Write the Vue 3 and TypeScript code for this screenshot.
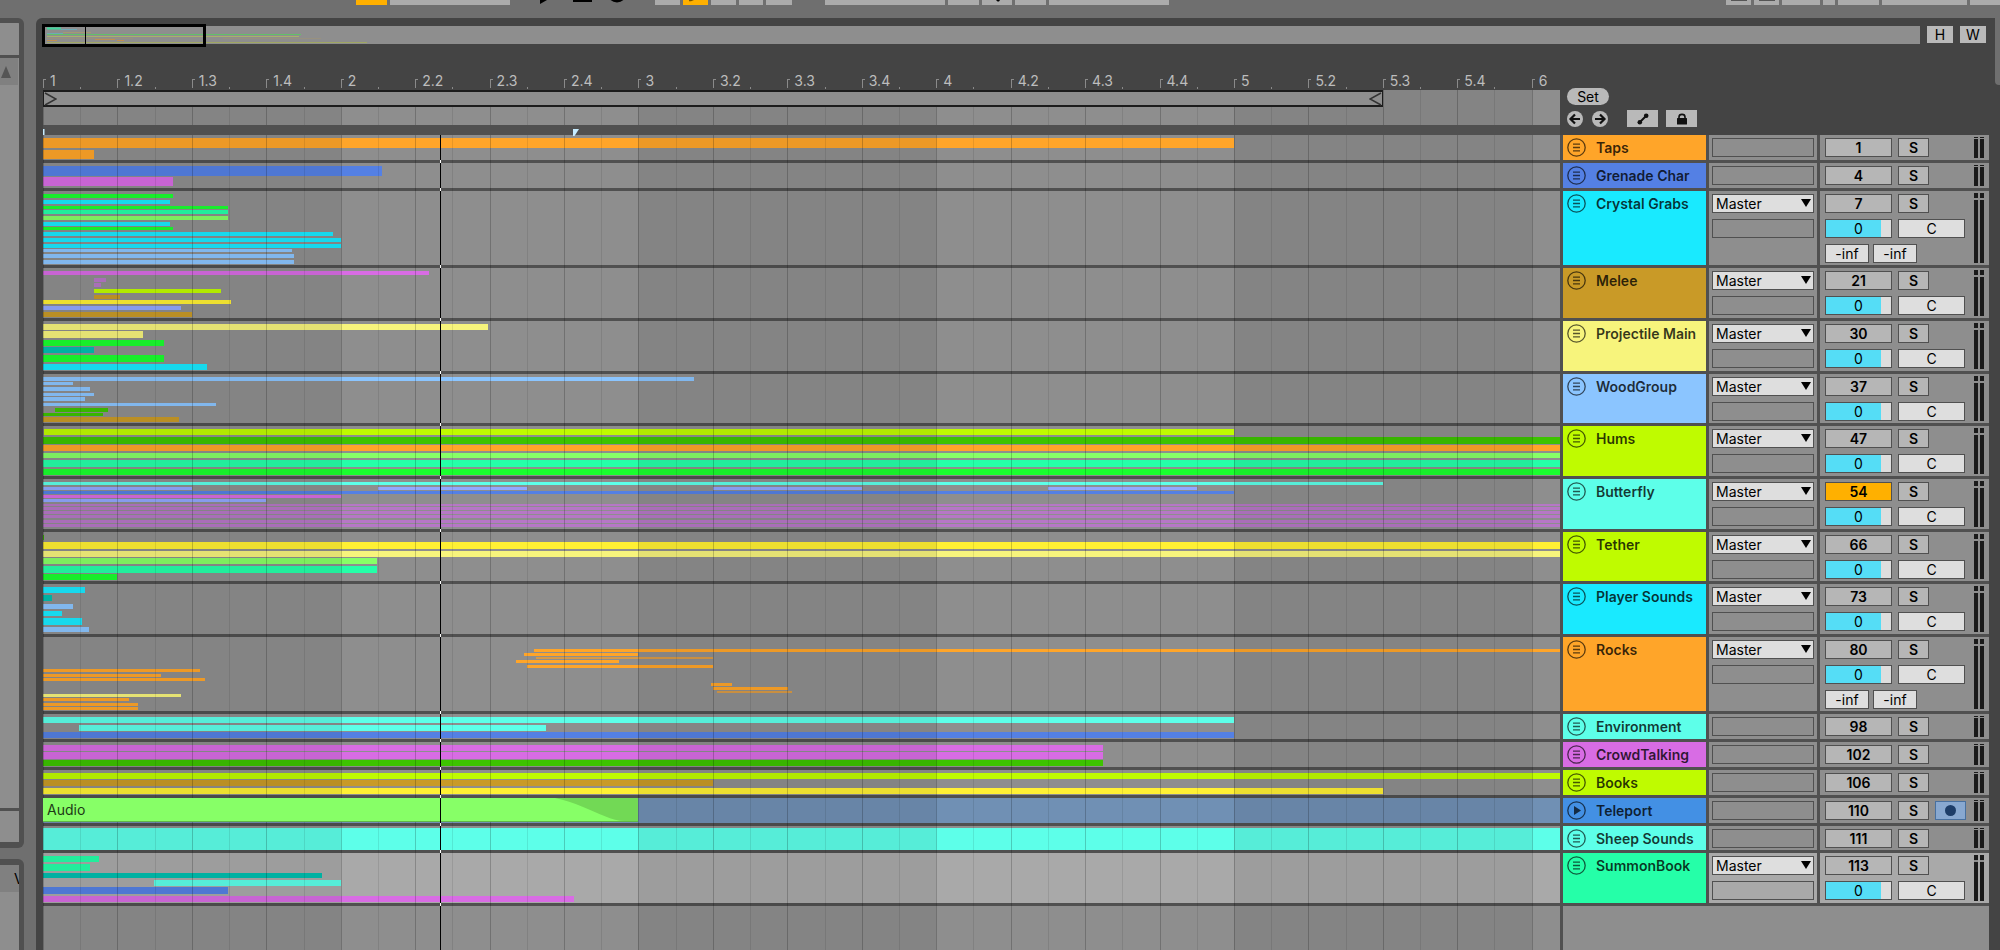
<script setup lang="ts">
import { ref } from 'vue'

type Clip = [color: string, start: number, end: number, top: number, height: number]

interface Track {
  name: string
  color: string
  num: number
  height: number
  clips: Clip[]
  sends?: boolean
  routed?: boolean
  muted?: boolean
  selected?: boolean
  audio?: boolean
}

// Visible range of the arrangement, in beats.
const END = 20.38
const PLAYHEAD = 5.34
const LOOP_END = 18

const C = {
  orange: '#ffa529', blue: '#5480e4', magenta: '#d86ce4', green: '#1aff2f', cyan: '#19eaff',
  mint: '#25ffa8', leaf: '#87ff67', sky: '#8bc5ff', brown: '#c99a27', lime: '#bffb00',
  yellow: '#fff034', pale: '#f7f47c', peri: '#92a7ff', teal: '#00bfaf', forest: '#3dc300',
  aqua: '#5dffe9', purple: '#b677c6', azure: '#4390e4', amber: '#d99a45',
}

const tracks: Track[] = [
  { name: 'Taps', color: C.orange, num: 1, height: 28, clips: [[C.orange, 0, 16, 3, 10], [C.orange, 0, 0.68, 15, 9]] },
  { name: 'Grenade Char', color: C.blue, num: 4, height: 28, clips: [[C.blue, 0, 4.55, 3, 10], [C.magenta, 0, 1.75, 14, 9]] },
  {
    name: 'Crystal Grabs', color: C.cyan, num: 7, height: 77, routed: true, sends: true, clips: [
      [C.green, 0, 1.75, 3, 4], [C.cyan, 0, 1.7, 9, 4], [C.green, 0, 2.49, 15, 3], [C.mint, 0, 2.49, 19, 4],
      [C.leaf, 0, 2.49, 25, 4], [C.cyan, 0, 1.7, 31, 4], [C.green, 0, 1.75, 36, 3], [C.cyan, 0, 3.89, 41, 4],
      [C.cyan, 0, 4, 47, 4], [C.cyan, 0, 4, 53, 4], [C.sky, 0, 3.34, 58, 3], [C.sky, 0, 3.37, 63, 4], [C.sky, 0, 3.37, 69, 4],
    ],
  },
  {
    name: 'Melee', color: C.brown, num: 21, height: 53, routed: true, clips: [
      [C.magenta, 0, 5.18, 3, 4], [C.purple, 0.68, 0.84, 10, 4], [C.purple, 0.68, 0.78, 15, 4], [C.lime, 0.68, 2.39, 21, 4],
      [C.brown, 0.68, 1.03, 27, 4], [C.yellow, 0, 2.53, 32, 4], [C.peri, 0, 1.86, 38, 4], [C.brown, 0, 2, 44, 5],
    ],
  },
  {
    name: 'Projectile Main', color: C.pale, num: 30, height: 53, routed: true, clips: [
      [C.pale, 0, 5.98, 3, 6], [C.pale, 0, 1.35, 10, 7], [C.green, 0, 1.63, 19, 6], [C.teal, 0, 0.68, 26, 6],
      [C.green, 0, 1.63, 34, 7], [C.cyan, 0, 2.2, 43, 6],
    ],
  },
  {
    name: 'WoodGroup', color: C.sky, num: 37, height: 52, routed: true, clips: [
      [C.sky, 0, 8.74, 3, 4], [C.sky, 0, 0.4, 8, 3], [C.sky, 0, 0.63, 13, 4], [C.sky, 0, 0.68, 19, 3], [C.sky, 0, 0.57, 23, 4],
      [C.sky, 0, 2.32, 29, 3], [C.forest, 0.16, 0.88, 34, 4], [C.forest, 0, 0.81, 39, 3], [C.brown, 0, 1.83, 43, 5],
    ],
  },
  {
    name: 'Hums', color: C.lime, num: 47, height: 53, routed: true, clips: [
      [C.lime, 0.02, 16, 3, 6], [C.forest, 0, END, 11, 7], [C.orange, 0, END, 19, 6], [C.leaf, 0, END, 27, 5],
      [C.mint, 0, END, 34, 7], [C.green, 0, END, 43, 6],
    ],
  },
  {
    name: 'Butterfly', color: C.aqua, num: 54, height: 53, routed: true, muted: true, clips: [
      [C.aqua, 0, 18, 3, 3], [C.peri, 0, 2, 8, 3], [C.peri, 4.5, 6.5, 8, 3], [C.peri, 9, 11, 8, 3], [C.peri, 13.5, 15.5, 8, 3],
      [C.blue, 0, 16, 12, 3], [C.magenta, 0, 4, 16, 3], [C.peri, 0, 3, 20, 3],
      [C.purple, 0, END, 25, 2], [C.purple, 0, END, 28, 3], [C.purple, 0, END, 32, 3], [C.purple, 0, END, 36, 3],
      [C.purple, 0, END, 41, 3], [C.purple, 0, END, 45, 3],
    ],
  },
  {
    name: 'Tether', color: C.lime, num: 66, height: 52, routed: true, clips: [
      [C.forest, 0, 0.02, 3, 5], [C.yellow, 0, END, 10, 7], [C.pale, 0, END, 19, 6], [C.leaf, 0, 4.49, 26, 6],
      [C.mint, 0, 4.49, 34, 7], [C.green, 0, 1, 42, 6],
    ],
  },
  {
    name: 'Player Sounds', color: C.cyan, num: 73, height: 53, routed: true, clips: [
      [C.cyan, 0, 0.57, 3, 6], [C.teal, 0, 0.12, 11, 6], [C.sky, 0, 0.4, 20, 5], [C.cyan, 0, 0.25, 27, 5],
      [C.cyan, 0, 0.52, 34, 7], [C.sky, 0, 0.62, 43, 5],
    ],
  },
  {
    name: 'Rocks', color: C.orange, num: 80, height: 77, routed: true, sends: true, clips: [
      [C.orange, 6.6, END, 12, 3], [C.orange, 6.46, 8, 16, 3], [C.amber, 6.62, 9, 20, 2], [C.orange, 6.36, 7.74, 23, 3],
      [C.orange, 6.5, 9, 28, 3], [C.orange, 0, 2.11, 32, 3], [C.orange, 0, 1.58, 37, 3], [C.orange, 0, 2.18, 41, 3],
      [C.orange, 8.98, 9.25, 46, 3], [C.orange, 9, 10.01, 50, 3], [C.amber, 9.06, 10.06, 54, 2],
      [C.pale, 0, 1.86, 57, 3], [C.orange, 0, 1.15, 61, 3], [C.orange, 0, 1.27, 66, 3], [C.orange, 0, 1.27, 70, 3],
    ],
  },
  { name: 'Environment', color: C.aqua, num: 98, height: 28, clips: [[C.aqua, 0, 16, 3, 6], [C.aqua, 0.48, 6.76, 11, 6], [C.blue, 0, 16, 18, 6]] },
  { name: 'CrowdTalking', color: C.magenta, num: 102, height: 28, clips: [[C.magenta, 0, 14.24, 3, 6], [C.magenta, 0, 14.24, 10, 7], [C.forest, 0, 14.24, 18, 6]] },
  { name: 'Books', color: C.lime, num: 106, height: 28, clips: [[C.lime, 0, END, 3, 6], [C.brown, 0, 9, 10, 6], [C.yellow, 0, 18, 18, 6]] },
  { name: 'Teleport', color: C.azure, num: 110, height: 28, audio: true, clips: [] },
  { name: 'Sheep Sounds', color: C.aqua, num: 111, height: 27, clips: [[C.aqua, 0, END, 2, 22]] },
  {
    name: 'SummonBook', color: C.mint, num: 113, height: 53, routed: true, selected: true, clips: [
      [C.mint, 0, 0.75, 3, 6], [C.mint, 0, 0.63, 11, 7], [C.teal, 0, 3.75, 20, 5], [C.aqua, 1.49, 4, 27, 6],
      [C.blue, 0, 2.49, 34, 7], [C.magenta, 0, 7.13, 43, 6],
    ],
  },
]

const routes = ref<string[]>(tracks.map(() => 'Master'))

const pct = (beats: number): string => `${(beats / END) * 100}%`
const clipStyle = ([color, start, end, top, height]: Clip) => ({
  left: pct(start), width: pct(end - start), top: `${top}px`, height: `${height}px`, background: color,
})

const beats = Array.from({ length: 21 }, (_, i) => ({
  at: i,
  label: i % 4 ? `${Math.floor(i / 4) + 1}.${(i % 4) + 1}` : `${i / 4 + 1}`,
}))
const halves = Array.from({ length: 20 }, (_, i) => i + 0.5)
const darkBars = [0, 8, 16]

const px = (w: number) => ({ width: `${w}px` })
const transportGroups: { cls: string; items: { w: number; on?: boolean; dash?: boolean; dot?: boolean }[] }[] = [
  { cls: 'g-mode', items: [{ w: 25 }, { w: 25, on: true, dot: true }, { w: 25 }, { w: 24 }, { w: 26 }] },
  { cls: 'g-loop', items: [{ w: 120 }, { w: 31 }, { w: 30, dot: true }, { w: 31 }, { w: 120 }] },
  { cls: 'g-right', items: [{ w: 25, dash: true }, { w: 25, dash: true }, { w: 38 }, { w: 12 }, { w: 41 }, { w: 85 }, { w: 30 }] },
]
</script>

<template>
  <div class="app">
    <header class="transport">
      <div class="group g-tempo">
        <button class="tb on" :style="px(31)" aria-label="Metronome"></button>
        <button class="tb" :style="px(120)" aria-label="Quantization"></button>
      </div>
      <svg class="transport-icons" width="84" height="5" viewBox="0 0 84 5" aria-hidden="true">
        <path d="M0 -14V4L7 0Z" />
        <rect x="33" y="-14" width="19" height="16" />
        <circle cx="77" cy="-7" r="9.500" />
      </svg>
      <div v-for="g in transportGroups" :key="g.cls" class="group" :class="g.cls">
        <button v-for="(b, i) in g.items" :key="i" class="tb" :class="{ on: b.on, dash: b.dash }" :style="px(b.w)" aria-label="Transport control">
          <svg v-if="b.dot" width="20" height="5" viewBox="0 0 20 5"><path :d="b.on ? 'M6 0H11L8 1.200H6Z' : 'M14 0H18L17 1.500H15.500Z'" :fill="b.on ? '#7a5500' : '#000'" /></svg>
        </button>
      </div>
    </header>

    <div class="main">
      <aside class="sidebar">
        <div class="panel upper">
          <div class="panel-head"></div>
          <button class="scroll-up" aria-label="Scroll up">
            <svg width="12" height="14" viewBox="0 0 12 14"><path d="M6 1L11 13H1Z" fill="#555" /></svg>
          </button>
          <div class="panel-body"></div>
          <div class="panel-foot"></div>
        </div>
        <div class="panel lower">
          <div class="lower-head">V</div>
        </div>
      </aside>

      <main class="workspace">
        <div class="edge-tab"></div>
        <div class="overview-row">
          <div class="overview">
            <svg class="mini" width="340" height="18" viewBox="0 0 340 18" fill="none" aria-hidden="true">
              <path d="M4 2.500H18" stroke="#3fd79c" stroke-width="2" />
              <path d="M18 3.500H34M4 7.500H20" stroke="#6fa9b5" />
              <path d="M20 6.500H48" stroke="#a49a72" />
              <path d="M4 8.500H258" stroke="#62c168" />
              <path d="M4 10.500H256" stroke="#a9b06c" />
              <path d="M4 12.500H90M180 12.500H278" stroke="#98917f" />
              <path d="M4 14.500H14M52 13.500H72M74 14.500H81" stroke="#c08f52" />
              <path d="M4 16.500H324" stroke="#9fa763" />
            </svg>
            <div class="view-box"><i class="mini-playhead"></i></div>
          </div>
          <button class="hw">H</button>
          <button class="hw">W</button>
        </div>

        <div class="arrangement">
          <section class="timeline">
            <div class="ruler">
              <div v-for="b in beats" :key="b.at" class="tick" :style="{ left: pct(b.at) }">{{ b.label }}</div>
              <i v-for="h in halves" :key="h" class="half-tick" :style="{ left: pct(h) }"></i>
            </div>
            <div class="canvas">
              <div class="scrub">
                <div class="loop" :style="{ width: pct(LOOP_END) }">
                  <svg width="13" height="14" viewBox="0 0 13 14" fill="none" stroke="#333" stroke-width="1.500"><path d="M1 1L12 7L1 13" /></svg>
                  <svg width="13" height="14" viewBox="0 0 13 14" fill="none" stroke="#333" stroke-width="1.500"><path d="M12 1L1 7L12 13" /></svg>
                </div>
              </div>
              <div class="locators">
                <svg class="locator" :style="{ left: '0%' }" width="2" height="7" viewBox="0 0 2 7"><path d="M0 0H1.500V6H0Z" fill="#c6ecff" /></svg>
                <svg class="locator" :style="{ left: pct(7.12) }" width="6" height="7" viewBox="0 0 6 7"><path d="M0 0H6L1.500 7H0Z" fill="#c6ecff" /></svg>
              </div>
              <div class="lanes">
                <div v-for="t in tracks" :key="t.num" class="lane" :class="{ selected: t.selected, audio: t.audio }" :style="{ height: t.height + 'px' }">
                  <div v-for="(c, i) in t.clips" :key="i" class="clip" :style="clipStyle(c)"></div>
                  <div v-if="t.audio" class="audio-clip" :style="{ width: pct(8) }">
                    <span>Audio</span>
                    <svg class="fade" viewBox="0 0 100 24" preserveAspectRatio="none"><path d="M0 0C24 4 42 13 60 19C68 22 76 24 84 24H100V0Z" fill="#72d955" /></svg>
                  </div>
                  <i class="playhead-gap" :style="{ left: pct(PLAYHEAD) }"></i>
                </div>
                <div class="playhead" :style="{ left: pct(PLAYHEAD) }"></div>
              </div>
              <div class="grid" aria-hidden="true">
                <div v-for="b in darkBars" :key="b" class="shade" :style="{ left: pct(b), width: pct(4) }"></div>
                <i v-for="b in beats" :key="b.at" class="line" :style="{ left: pct(b.at) }"></i>
                <i v-for="h in halves" :key="h" class="line half" :style="{ left: pct(h) }"></i>
              </div>
            </div>
          </section>

          <section class="mixer">
            <div class="mixer-head">
              <button class="set">Set</button>
              <div class="tools">
                <button class="round" aria-label="Previous locator">
                  <svg width="16" height="16" viewBox="0 0 16 16" fill="none" stroke="#111" stroke-width="2.200"><path d="M13 8H4M8 3.500L3.500 8L8 12.500" /></svg>
                </button>
                <button class="round" aria-label="Next locator">
                  <svg width="16" height="16" viewBox="0 0 16 16" fill="none" stroke="#111" stroke-width="2.200"><path d="M3 8H12M8 3.500L12.500 8L8 12.500" /></svg>
                </button>
                <button class="tool first" aria-label="Automation mode">
                  <svg width="12" height="12" viewBox="0 0 12 12"><path d="M3 9L9 3" stroke="#111" stroke-width="2" /><circle cx="2.800" cy="9.200" r="2.300" fill="#111" /><circle cx="9.200" cy="2.800" r="2.300" fill="#111" /></svg>
                </button>
                <button class="tool" aria-label="Lock envelopes">
                  <svg width="12" height="12" viewBox="0 0 12 12"><rect x="1" y="5" width="10" height="6.500" rx="0.500" fill="#111" /><path d="M3 6V4C3 0.500 9 0.500 9 4V6" fill="none" stroke="#111" stroke-width="1.600" /></svg>
                </button>
              </div>
            </div>

            <div v-for="(t, i) in tracks" :key="t.num" class="strip" :class="{ selected: t.selected }" :style="{ height: t.height + 'px' }">
              <div class="title" :style="{ background: t.color }">
                <button class="fold" :aria-label="'Unfold ' + t.name">
                  <svg width="19" height="19" viewBox="0 0 19 19" fill="none" stroke="#000" stroke-opacity="0.650">
                    <circle cx="9.500" cy="9.500" r="8.700" stroke-width="1.300" />
                    <path v-if="t.audio" d="M7 5L14 9.500L7 14Z" fill="#000" fill-opacity="0.700" stroke="none" />
                    <path v-else d="M6 6.200H13M6 9.500H13M6 12.800H13" stroke-width="1.300" />
                  </svg>
                </button>
                <span class="name">{{ t.name }}</span>
              </div>
              <div class="io">
                <label v-if="t.routed" class="route">
                  <select v-model="routes[i]" :aria-label="t.name + ' output'"><option>Master</option></select>
                  <svg width="10" height="8" viewBox="0 0 10 8"><path d="M0 0H10L5 8Z" fill="#000" /></svg>
                </label>
                <div class="slot"></div>
              </div>
              <div class="controls">
                <div class="knobs">
                  <div class="krow">
                    <button class="num" :class="{ muted: t.muted }">{{ t.num }}</button>
                    <button class="solo">S</button>
                    <button v-if="t.audio" class="arm" aria-label="Arm recording"><i></i></button>
                  </div>
                  <div v-if="t.routed" class="krow">
                    <input class="field vol" value="0" :aria-label="t.name + ' volume'" />
                    <input class="field" value="C" :aria-label="t.name + ' pan'" />
                  </div>
                  <div v-if="t.sends" class="krow sends">
                    <input class="field send" value="-inf" :aria-label="t.name + ' send A'" />
                    <input class="field send" value="-inf" :aria-label="t.name + ' send B'" />
                  </div>
                </div>
                <div class="meter" :class="{ short: !t.routed }"><i></i><i></i></div>
              </div>
            </div>
            <div class="mixer-rest"></div>
          </section>
        </div>
      </main>
    </div>
  </div>
</template>

<style>
body {
  margin: 0;
  background: #6f6f6f;
}
</style>

<style scoped>
.app {
  display: flex;
  flex-direction: column;
  min-height: 100vh;
  overflow: hidden;
  background: #6f6f6f;
  color: #000;
  font: 14px/19px Inter, "Open Sans", sans-serif;
}
.app *,
.app *::before {
  box-sizing: border-box;
}
button,
select,
input {
  margin: 0;
  padding: 0;
  border: 0;
  border-radius: 0;
  font: inherit;
  color: inherit;
  outline: 0;
}
svg {
  display: block;
}

/* transport */
.transport {
  display: flex;
  height: 5px;
  margin-bottom: 13px;
  overflow: hidden;
}
.group {
  display: flex;
  gap: 3px;
}
.g-tempo { margin-left: 356px; }
.transport-icons { margin: 0 31px 0 30px; flex: none; }
.g-loop { margin-left: 33px; }
.g-right { margin-left: auto; }
.tb {
  height: 5px;
  background: #ababab;
  flex: none;
}
.tb.on { background: #ffb000; }
.tb.dash {
  background: linear-gradient(#555, #555) center top / 16px 1px no-repeat #ababab;
}

.main {
  display: flex;
  flex: 1;
  gap: 12px;
}

/* sidebar */
.sidebar {
  display: flex;
  flex-direction: column;
  gap: 11px;
  width: 24px;
  flex: none;
}
.panel {
  display: flex;
  flex-direction: column;
  border: solid #505050;
  border-width: 5px 5px 0 0;
  background: #8e8e8e;
}
.upper {
  flex: 1;
  border-bottom-width: 6px;
  border-radius: 0 6px 6px 0;
}
.lower {
  height: 91px;
  border-top-width: 6px;
  border-radius: 0 6px 0 0;
}
.panel-head {
  height: 35px;
  border-bottom: 3px solid #505050;
}
.scroll-up {
  display: flex;
  align-items: center;
  width: 18px;
  height: 27px;
  background: #808080;
}
.panel-body { flex: 1; }
.panel-foot {
  height: 34px;
  border-top: 3px solid #505050;
}
.lower-head {
  height: 27px;
  padding-left: 14px;
  line-height: 27px;
  background: #808080;
  overflow: hidden;
}

/* workspace */
.workspace {
  position: relative;
  display: flex;
  flex-direction: column;
  flex: 1;
  min-width: 0;
  padding: 8px 0 0 7px;
  background: #444;
  border-radius: 6px 0 0 0;
}
.edge-tab {
  position: absolute;
  top: 0;
  right: 0;
  width: 5px;
  height: 67px;
  background: #6f6f6f;
  border-radius: 0 0 0 4px;
}
.overview-row {
  display: flex;
  height: 18px;
  padding-right: 14px;
}
.overview {
  position: relative;
  flex: 1;
  background: #8e8e8e;
}
.mini {
  position: absolute;
  left: 0;
  top: 0;
}
.view-box {
  position: absolute;
  left: -1px;
  top: -2px;
  width: 164px;
  height: 23px;
  border: 3px solid #000;
}
.mini-playhead {
  position: absolute;
  left: 40px;
  top: 0;
  width: 1px;
  height: 17px;
  background: #000;
}
.hw {
  width: 26px;
  height: 17px;
  margin-left: 7px;
  line-height: 17px;
  background: #b9b9b9;
}

.arrangement {
  display: flex;
  flex: 1;
}
.timeline {
  display: flex;
  flex-direction: column;
  flex: 1;
  min-width: 0;
  overflow: hidden;
}
.ruler {
  position: relative;
  height: 46px;
  color: #bdbdbd;
}
.tick {
  position: absolute;
  bottom: 0;
  padding-left: 7px;
  line-height: 18px;
}
.tick::before {
  content: "";
  position: absolute;
  left: 0;
  bottom: 2px;
  width: 3px;
  height: 9px;
  border: solid #8a8a8a;
  border-width: 1px 0 0 1px;
}
.half-tick {
  position: absolute;
  bottom: 1px;
  width: 1px;
  height: 2px;
  background: #8a8a8a;
}

.canvas {
  position: relative;
  flex: 1;
  background: #8e8e8e;
}
.scrub { height: 35px; }
.loop {
  position: relative;
  z-index: 2;
  display: flex;
  justify-content: space-between;
  height: 17px;
  border: solid #1c1c1c;
  border-width: 2px 1px 2px 1px;
  background: #8e8e8e;
}
.locators {
  position: relative;
  z-index: 2;
  height: 10px;
  background: #505050;
}
.locator {
  position: absolute;
  top: 4px;
}
.lanes { position: relative; }
.lane {
  position: relative;
  border-bottom: 3px solid #505050;
}
.lane.selected { background: #a9a9a9; }
.lane.audio { background: #7090b4; }
.clip { position: absolute; }
.audio-clip {
  position: relative;
  z-index: 2;
  height: 24px;
  padding-left: 4px;
  border-bottom: 1px solid #5fb648;
  background: #87ff67;
  line-height: 24px;
  color: #1d3a16;
}
.fade {
  position: absolute;
  right: 0;
  top: 0;
  width: 14%;
  height: 23px;
}
.playhead,
.playhead-gap {
  position: absolute;
  z-index: 3;
  width: 1px;
}
.playhead {
  top: 0;
  height: 100vh;
  background: #000;
}
.playhead-gap {
  z-index: 4;
  bottom: -3px;
  height: 3px;
  background: #fff;
}
.grid {
  position: absolute;
  inset: 0;
  z-index: 1;
  overflow: hidden;
  pointer-events: none;
}
.shade {
  position: absolute;
  top: 0;
  bottom: 0;
  background: rgba(0, 0, 0, 0.07);
}
.line {
  position: absolute;
  top: 0;
  bottom: 0;
  width: 1px;
  background: rgba(0, 0, 0, 0.2);
}
.line.half { background: rgba(0, 0, 0, 0.09); }

/* mixer */
.mixer {
  display: flex;
  flex-direction: column;
  width: 440px;
  flex: none;
  padding-right: 11px;
}
.mixer-head {
  height: 91px;
  padding: 44px 0 0 7px;
}
.set {
  display: block;
  width: 42px;
  height: 17px;
  line-height: 17px;
  border-radius: 9px;
  background: #b9b9b9;
}
.tools {
  display: flex;
  align-items: center;
  height: 17px;
  margin-top: 5px;
}
.round {
  width: 16px;
  height: 16px;
  margin-right: 9px;
  border-radius: 50%;
  background: #b9b9b9;
}
.tool {
  display: grid;
  place-items: center;
  width: 31px;
  height: 17px;
  margin-left: 8px;
  background: #b9b9b9;
}
.tool.first { margin-left: 10px; }
.strip {
  display: grid;
  grid-template-columns: 143px 108px 1fr;
  gap: 3px;
  padding-left: 3px;
  border-bottom: 3px solid #505050;
  background: #505050;
}
.title {
  display: flex;
  align-items: flex-start;
  gap: 10px;
  padding: 3px 4px 0;
  overflow: hidden;
}
.fold {
  width: 19px;
  height: 19px;
  flex: none;
  background: none;
}
.name {
  flex: 1;
  overflow: hidden;
  white-space: nowrap;
  font-weight: 600;
  line-height: 19px;
  color: rgba(0, 0, 0, 0.78);
}
.io,
.controls { background: #8e8e8e; }
.selected .io,
.selected .controls { background: #a9a9a9; }
.io {
  display: flex;
  flex-direction: column;
  gap: 6px;
  padding: 3px 3px 0 3px;
}
.route {
  position: relative;
  display: block;
  height: 19px;
}
.route select {
  display: block;
  width: 100%;
  height: 19px;
  padding-left: 3px;
  border: 1px solid #505050;
  appearance: none;
  background: #dedede;
  line-height: 17px;
}
.route svg {
  position: absolute;
  right: 3px;
  top: 5px;
  pointer-events: none;
}
.slot {
  height: 19px;
  border: 1px solid #505050;
}
.controls {
  display: flex;
  justify-content: space-between;
  padding: 2px 5px;
}
.knobs {
  display: flex;
  flex-direction: column;
  gap: 6px;
  padding-top: 1px;
}
.krow {
  display: flex;
  gap: 6px;
}
.krow.sends { gap: 4px; }
.num,
.solo,
.arm,
.field {
  height: 19px;
  border: 1px solid #505050;
  background: #b6b6b6;
  text-align: center;
  line-height: 17px;
}
.num {
  width: 67px;
  font-weight: 600;
}
.num.muted { background: #ffb000; }
.solo {
  width: 31px;
  font-weight: 600;
}
.arm {
  display: grid;
  place-items: center;
  width: 31px;
  border-color: #48709f;
  background: #88a8d0;
}
.arm i {
  width: 11px;
  height: 11px;
  border-radius: 50%;
  background: #1d3d68;
}
.field {
  width: 67px;
  background: #dedede;
}
.field.vol {
  background: linear-gradient(90deg, #55ddf6 84%, #dedede 84%);
}
.field.send { width: 44px; }
.meter {
  display: flex;
  gap: 2px;
}
.meter i {
  width: 4px;
  background: linear-gradient(#1a1a1a 5px, #8e8e8e 5px, #8e8e8e 7px, #1a1a1a 7px);
}
.meter.short i {
  background: linear-gradient(#1a1a1a 1px, #8e8e8e 1px, #8e8e8e 2px, #1a1a1a 2px);
}
.mixer-rest {
  flex: 1;
  border-left: 3px solid #505050;
  background: #8e8e8e;
}
</style>
